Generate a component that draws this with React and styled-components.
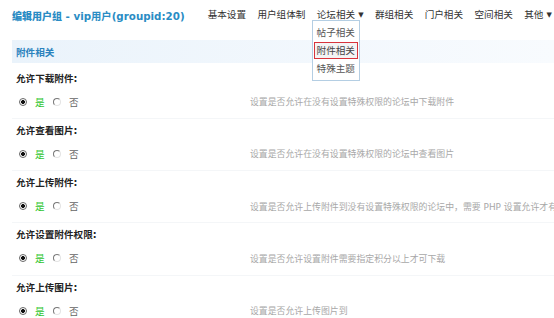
import React from "react";
import styled, { createGlobalStyle } from "styled-components";

const Global = createGlobalStyle`
  html, body { margin: 0; padding: 0; background: #fff; }
  body {
    width: 554px; height: 318px; overflow: hidden;
    font-family: "DejaVu Sans", "Noto Sans CJK SC", sans-serif;
    font-size: 10px; color: #333;
  }
`;

const Page = styled.div`
  padding-left: 12px;
  width: 542px;
  overflow: hidden;
`;

const TopBar = styled.div`
  display: flex;
  align-items: center;
  height: 30px;
  white-space: nowrap;
`;

const Title = styled.div`
  font-weight: bold;
  font-size: 10.3px;
  color: #2a8cc4;
  & b { font-size: 10px; }
`;

const Nav = styled.div`
  display: flex;
  align-items: center;
  margin-left: 23px;
  gap: 11.4px;
`;

const NavItem = styled.div`
  position: relative;
  font-size: 9.6px;
  color: #333;
  line-height: 14px;
`;

const Caret = styled.span`
  font-size: 7px;
  margin-left: 3px;
  vertical-align: 1px;
`;

const Menu = styled.div`
  position: absolute;
  left: -5px;
  top: 12px;
  width: 44px;
  padding: 3px 1px;
  background: #fff;
  border: 1px solid #b4cee3;
  display: flex;
  flex-direction: column;
  gap: 1px;
  z-index: 2;
`;

const MenuItem = styled.div`
  height: 15px;
  line-height: 15px;
  text-align: center;
  font-size: 9.6px;
  color: ${(p) => (p.$active ? "#444" : "#555")};
  border: 1px solid ${(p) => (p.$active ? "#d8343c" : "transparent")};
  background: ${(p) => (p.$active ? "#f4f4f4" : "transparent")};
`;

const Band = styled.div`
  margin-top: 10px;
  height: 23px;
  display: flex;
  align-items: center;
  padding-left: 4px;
  background: linear-gradient(to right, #eaf3fb, #f3f8fd 60%, #f8fbfe);
  font-weight: bold;
  font-size: 9.6px;
  color: #2a82bd;
`;

const Rows = styled.div`
  margin-top: 3.5px;
`;

const Row = styled.div`
  height: 52.3px;
  border-bottom: 1px solid #f4f6f8;
  box-sizing: border-box;
`;

const Label = styled.div`
  height: 23px;
  line-height: 23px;
  padding-left: 4px;
  font-weight: bold;
  font-size: 9.6px;
  color: #222;
`;

const OptionLine = styled.div`
  height: 24px;
  display: flex;
  align-items: center;
  padding-left: 7px;
  white-space: nowrap;
`;

const Choice = styled.label`
  flex: none;
  display: flex;
  align-items: center;
  gap: 8px;
  width: 34px;
  font-size: 9.6px;
  color: ${(p) => (p.$on ? "#2fc52f" : "#666")};
`;

const Radio = styled.span`
  width: 6px;
  height: 6px;
  border-radius: 50%;
  border: 1px solid;
  border-color: ${(p) => (p.$on ? "#666" : "#777 #e4e4e4 #e4e4e4 #777")};
  background: ${(p) => (p.$on ? "radial-gradient(circle, #111 0 1.8px, #fff 2.2px)" : "#fff")};
`;

const Desc = styled.div`
  flex: none;
  margin-left: 163px;
  font-size: 8.9px;
  color: #a8a8a8;
`;

const rows = [
  ["允许下载附件:", "设置是否允许在没有设置特殊权限的论坛中下载附件"],
  ["允许查看图片:", "设置是否允许在没有设置特殊权限的论坛中查看图片"],
  ["允许上传附件:", "设置是否允许上传附件到没有设置特殊权限的论坛中，需要 PHP 设置允许才有"],
  ["允许设置附件权限:", "设置是否允许设置附件需要指定积分以上才可下载"],
  ["允许上传图片:", "设置是否允许上传图片到"],
];

export default function App() {
  return (
    <>
      <Global />
      <Page>
        <TopBar>
          <Title>
            <b>编辑用户组</b> - vip用户(groupid:20)
          </Title>
          <Nav>
            <NavItem>基本设置</NavItem>
            <NavItem>用户组体制</NavItem>
            <NavItem>
              论坛相关<Caret>▼</Caret>
              <Menu>
                <MenuItem>帖子相关</MenuItem>
                <MenuItem $active>附件相关</MenuItem>
                <MenuItem>特殊主题</MenuItem>
              </Menu>
            </NavItem>
            <NavItem>群组相关</NavItem>
            <NavItem>门户相关</NavItem>
            <NavItem>空间相关</NavItem>
            <NavItem>
              其他<Caret>▼</Caret>
            </NavItem>
          </Nav>
        </TopBar>
        <Band>附件相关</Band>
        <Rows>
          {rows.map(([label, desc]) => (
            <Row key={label}>
              <Label>{label}</Label>
              <OptionLine>
                <Choice $on>
                  <Radio $on />是
                </Choice>
                <Choice>
                  <Radio />否
                </Choice>
                <Desc>{desc}</Desc>
              </OptionLine>
            </Row>
          ))}
        </Rows>
      </Page>
    </>
  );
}
